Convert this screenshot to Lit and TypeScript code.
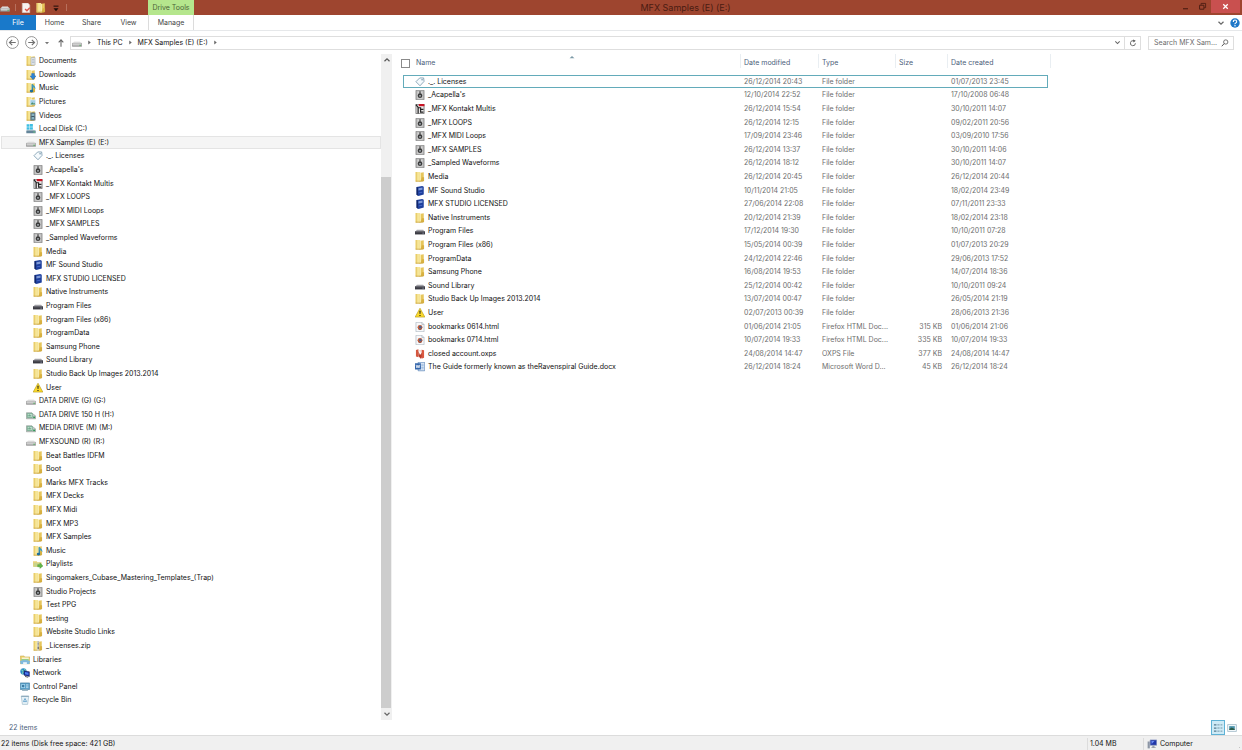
import { LitElement, html, css, svg, nothing } from "lit";
import { customElement, property } from "lit/decorators.js";
import { classMap } from "lit/directives/class-map.js";

const folderBase = svg`
  <path d="M1 0h7v15H1z" fill="#f6e698"/>
  <path d="M1 0h2.500v15H1z" fill="#e9cd6c"/>
  <path d="M7 1.500L14 .5v13.500L7 15.500z" fill="#e6c65c"/>
  <path d="M7 1.500l2.500-.4v14L7 15.500z" fill="#f9ecae"/>
  <path d="M11 8.500h3.500v6H9z" fill="#d8b141"/>
  <path d="M1 14h12.500v1.300H1z" fill="#c9a33c"/>`;

const drive = svg`
  <path d="M3.500 5.500h9l3 3.500H.5z" fill="#e6e6e6"/>
  <path d="M.6 8.500h14.800v4.800H.6z" fill="#b9b9b9" stroke="#858585"/>
  <path d="M1 9h14v1.200H1z" fill="#f2f2f2"/>
  <path d="M12 10.800h2v1.500h-2z" fill="#3fae4c"/>`;

const icons: Record<string, unknown> = {
  folder: folderBase,
  documents: svg`${folderBase}<path d="M8 2.500h6.500v12H8z" fill="#e3e7ea" stroke="#98a1aa" stroke-width=".8"/><path d="M9.500 5.500h4M9.500 8h4M9.500 10.500h4" stroke="#8c9cb0" stroke-width=".8"/>`,
  downloads: svg`${folderBase}<path d="M9 5.500h4.500v4H16L11.300 15.500 6.500 9.500H9z" fill="#2c83d6" stroke="#1c5fa5" stroke-width=".6"/>`,
  music: svg`${folderBase}<path d="M10 2v10" stroke="#1f7fae" stroke-width="2"/><path d="M10 2q5.500 2.500 5 8q-1.500-3-5-3.500z" fill="#3f9cbf"/><ellipse cx="8.800" cy="12.800" rx="2.800" ry="2.200" fill="#1f6f9e"/>`,
  pictures: svg`${folderBase}<path d="M6.500 4.500h9v8h-9z" fill="#a4cfe6" stroke="#f7f7f7"/><path d="M7 12l3-3.500 2 2 1.500-1 1.700 2.500z" fill="#4e8f6f"/>`,
  videos: svg`${folderBase}<path d="M7 2.500h8V15H7z" fill="#3d5869"/><path d="M9 4h4v4H9zM9 9.500h4v4H9z" fill="#86b3c2"/><path d="M8 3v11.500M14 3v11.500" stroke="#e2e8ec" stroke-width=".9" stroke-dasharray="1 1"/>`,
  system: svg`<path d="M1 .5h4.500v4H1zM6.200 0H11v4.500H6.200zM1 5.200h4.500v4H1zM6.200 5.200H11v4H6.200z" fill="#3fbfe3"/><path d="M2 9h11l2.500 2.500H.5z" fill="#c9d4da"/><path d="M.5 10.500h15v4.300H.5z" fill="#64859a"/><path d="M12 12h2v1.500h-2z" fill="#6ee07a"/>`,
  drive,
  netdrive: svg`<path d="M.5 4.500h9l3 3 3 2v4.500H.5z" fill="#c2c9c6" stroke="#8b9690"/><path d="M2 5.500h8v6.500H2z" fill="#d4ebdd" stroke="#5a9c7b"/><path d="M3.500 10.500V7.500M5.500 10.500V7M7.500 10.500V7.500" stroke="#2c7d55"/><path d="M11.500 10.500h3V13h-3z" fill="#2d9a56"/>`,
  tag: svg`<path d="M1.500 7.500L7.500 1.500h6.300l.7 5.500L8 14z" fill="#f5fafd" stroke="#6d8fa6" stroke-width="1.200"/><circle cx="11.300" cy="4.300" r="1.200" fill="#6d8fa6"/>`,
  speaker: svg`<path d="M1.500.5h13v15h-13z" fill="#b9b9b9" stroke="#777"/><path d="M4 2.500h8v11.500H4z" fill="#d4d4d4"/><path d="M8 2v4" stroke="#333" stroke-width="1.800"/><circle cx="8" cy="9" r="3.700" fill="#3a3a3a"/><circle cx="8" cy="9.300" r="1.400" fill="#b7c0c6"/>`,
  kontakt: svg`<path d="M1.500.5h13v15h-13z" fill="#eceaea" stroke="#444"/><path d="M6 0h9v3.500H6z" fill="#c81425"/><path d="M1.500 1L5 5.500V15" stroke="#222" stroke-width="2" fill="none"/><path d="M5 6h4v7.500M8 8.500h5.500M8 13h5.500" stroke="#222" stroke-width="1.800" fill="none"/>`,
  blue: svg`<path d="M2.500 1.500l9-1.500 2.500 1v12.500l-8.500 2.500-3-2z" fill="#1d3f9c"/><path d="M2.500 1.500l2 1v13l-2-1.500z" fill="#0f2260"/><path d="M5.500 3.500l6.500-1v3.500l-6.500 1z" fill="#7f9ad8"/><path d="M6 11l5.500-1" stroke="#4d6fd0" stroke-width="1.300"/>`,
  dark: svg`<path d="M3 6h10l2.500 3H.5z" fill="#a2a2a8"/><path d="M0 8.500h16v5H0z" fill="#3a3a42"/><path d="M1 9.500h14" stroke="#77777f"/><path d="M12 11.500h2" stroke="#b9c6e8"/>`,
  warning: svg`<path d="M8 .3L15.800 14.500H.2z" fill="#fbd92b" stroke="#b39a1c" stroke-linejoin="round"/><path d="M7 4.500h2l-.4 5H7.400zM7.100 11h1.800v1.900H7.100z" fill="#1c1c1c"/>`,
  playlists: svg`<path d="M0 3.500h6l1 1.500h6.500v7.500H0z" fill="#ecd27a"/><path d="M1 6h12.500v6.500H1z" fill="#cbd48a"/><path d="M7.500 9H11V6.500l5 4.500-5 4v-2.500H7.500z" fill="#62b94a" stroke="#418c31" stroke-width=".6"/>`,
  zip: svg`${folderBase}<path d="M6.500.5h3.500v15H6.500z" fill="#dcdcd2"/><path d="M8.300 1v9" stroke="#5f5f5f" stroke-width="1.500" stroke-dasharray="1.200 1"/><path d="M7.300 9.500h2.200v3.500H7.300z" fill="#77736a"/>`,
  libraries: svg`<path d="M.5 1.500h6l1 1.500h8v11H.5z" fill="#eccf6a" stroke="#bf9e3c" stroke-width=".7"/><path d="M3 4h11v4H3z" fill="#f7f2d3"/><path d="M2 6.500h12V9H2z" fill="#8fcb84"/><path d="M0 9.500q8-3 16 0l-1 5H1z" fill="#7fb9dd"/><path d="M5 11.500h6v3H5z" fill="#eaf5fb"/>`,
  network: svg`<circle cx="5.500" cy="5.500" r="5" fill="#2a8bc9"/><path d="M2 3q3 0 3 3t-2 3M7 1q2 2 1 5" stroke="#8ee0b0" stroke-width="1.600" fill="none"/><path d="M6.500 4.500L15 6v7.500L6.500 11.500z" fill="#1a2f9e" stroke="#0c1547" stroke-width=".8"/><path d="M8 6.500l5.500 1V11L8 10z" fill="#4b7cf0"/><path d="M8 13.500l5 1.300" stroke="#555" stroke-width="1.500"/>`,
  control: svg`<path d="M.5 1.500h14.800v10.500H.5z" fill="#5a9fc8" stroke="#457d9f"/><path d="M2 3.500h6v6H2z" fill="#a9dcf5"/><circle cx="5" cy="6.500" r="2.200" fill="#3f7ba4"/><path d="M9.500 4.500h4M9.500 6.700h4M9.500 9h4" stroke="#e6f5fd"/><path d="M4 12h8l1 2.500H3z" fill="#9fb7c4"/>`,
  recycle: svg`<path d="M2 2h12l-1.800 13H3.800z" fill="#e6f1f7" stroke="#97b5c6"/><path d="M2 2h12" stroke="#7c9db0" stroke-width="1.500"/><path d="M5.500 10.500l2.500-5 2.500 5z" fill="none" stroke="#5b9cc9" stroke-width="1.300"/>`,
  html: svg`<path d="M1.500.5h9.500l3.500 3.500v11.500h-13z" fill="#f7f8fa" stroke="#a5b0bc"/><path d="M11 .5V4h3.500" fill="none" stroke="#a5b0bc"/><circle cx="8" cy="8.500" r="3.900" fill="#c9603b"/><circle cx="8.500" cy="8.200" r="2.100" fill="#4b6590"/><path d="M5 11q3 2.500 6 0" stroke="#7a2b1a" fill="none"/>`,
  oxps: svg`<path d="M1.500 1.500l4-1V13l-4-1z" fill="#d4573f"/><path d="M10.500 1l4 1v12l-4 1.500z" fill="#d9573f"/><path d="M5.500 3.500V11l3.500 4.500 2-2.500V6L8 9.500z" fill="#bb3a27"/><path d="M6.500 1.500l2 4.500 1.500-4.500z" fill="#f1d3cb"/>`,
  word: svg`<path d="M5 .5h10.500v13.500H5z" fill="#eef4fb" stroke="#3f70ae"/><path d="M10 3.500h4M10 6h4M10 8.500h4M10 11h4" stroke="#5a8bc9"/><path d="M0 2h9.500v10H0z" fill="#3566ab"/><path d="M1.800 4.500l1.300 5 1.600-4.500 1.600 4.500 1.400-5" stroke="#fff" stroke-width="1.200" fill="none"/>`,
  computer: svg`<path d="M1 4h3.500v11H1z" fill="#8c96a5"/><path d="M5 1.500h10.500v8.500H5z" fill="#2036a8" stroke="#8d9cc4"/><path d="M7 3h5L7.500 8z" fill="#6d8df2"/><path d="M8.500 10.500h3.500V13h2v1.500H7V13h1.500z" fill="#9aa1ab"/>`,
  help: svg`<circle cx="8" cy="8" r="7.500" fill="#1f78c8"/><path d="M5.300 6.200q0-3 2.700-3t2.700 2.600q0 1.400-1.600 2.300T8 10" stroke="#fff" stroke-width="1.700" fill="none"/><circle cx="8" cy="12.300" r="1.200" fill="#fff"/>`,
  back: svg`<circle cx="8" cy="8" r="7.300" fill="#fff" stroke="#808080"/><path d="M12 8H4.500M7.600 4.700L4.300 8l3.300 3.300" stroke="#707070" stroke-width="1.500" fill="none"/>`,
  forward: svg`<circle cx="8" cy="8" r="7.300" fill="#fff" stroke="#808080"/><path d="M4 8h7.500M8.400 4.700L11.700 8l-3.300 3.300" stroke="#707070" stroke-width="1.500" fill="none"/>`,
  up: svg`<path d="M8 14V3.500M4.300 7L8 3l3.700 4" stroke="#666" stroke-width="1.700" fill="none"/>`,
  caret: svg`<path d="M2.500 5.500h11L8 11.500z" fill="#777"/>`,
  crumb: svg`<path d="M4 1.500L12 8l-8 6.500z" fill="#666"/>`,
  chevron: svg`<path d="M3 5.500l5 5 5-5" stroke="#666" stroke-width="2.400" fill="none"/>`,
  chevronUp: svg`<path d="M3 10.500l5-5 5 5" stroke="#555" stroke-width="2.400" fill="none"/>`,
  sort: svg`<path d="M1.500 11L8 5l6.500 6z" fill="#7d9aa8"/>`,
  refresh: svg`<path d="M12.800 8.500A5 5 0 1 1 9.500 3.700" stroke="#555" stroke-width="1.700" fill="none"/><path d="M8 .8l5.500 2.600L9 7z" fill="#555"/>`,
  search: svg`<circle cx="9.500" cy="6" r="4.300" stroke="#555" stroke-width="1.600" fill="none"/><path d="M6.500 9L1.500 14.500" stroke="#555" stroke-width="2"/>`,
  minimise: svg`<path d="M3.500 11h9v2h-9z" fill="#4a1c12"/>`,
  restore: svg`<path d="M5.500 5V2.500h8V10H11" stroke="#4a1c12" stroke-width="1.500" fill="none"/><path d="M2.800 5.800h7.700v7H2.800z" stroke="#4a1c12" stroke-width="1.700" fill="none"/>`,
  close: svg`<path d="M4 4l8 8M12 4l-8 8" stroke="#fff" stroke-width="2.200"/>`,
  properties: svg`<path d="M2 0h9l3 3v12.500H2z" fill="#f7f3f0" stroke="#cdb9b0"/><path d="M6.500 9.500l3 3 4.500-5" stroke="#dc5548" stroke-width="2.200" fill="none"/>`,
  menu: svg`<path d="M4 5h8" stroke="#1d0c08" stroke-width="1.600"/><path d="M4 8.500h8l-4 4.500z" fill="#1d0c08"/>`,
  details: svg`<path d="M1.500 3h4M1.500 8h4M1.500 13h4" stroke="#54798d" stroke-width="2"/><path d="M7 3h3.500M7 8h3.500M7 13h3.500M12 3h3M12 8h3M12 13h3" stroke="#6f91a3" stroke-width="1.500"/>`,
  large: svg`<path d="M1 2.500h14v11H1z" fill="#f5fafc" stroke="#8aa9b8"/><path d="M3.500 5h9v4.500h-9z" fill="#4b93ac"/><path d="M3.500 9.500l4-2.500 5 2.500V11h-9z" fill="#2d5d4b"/>`,
};

@customElement("x-icon")
class Icon extends LitElement {
  static styles = css`
    :host { display: inline-flex; flex: none; width: 10px; height: 10px; }
    svg { display: block; width: 100%; height: 100%; }
  `;
  @property() name = "folder";
  render() {
    return html`<svg viewBox="0 0 16 16" aria-hidden="true">${icons[this.name]}</svg>`;
  }
}

type Node = [level: number, icon: string, label: string];
const tree: Node[] = [
  [1, "documents", "Documents"], [1, "downloads", "Downloads"], [1, "music", "Music"],
  [1, "pictures", "Pictures"], [1, "videos", "Videos"], [1, "system", "Local Disk (C:)"],
  [1, "drive", "MFX Samples (E) (E:)"],
  [2, "tag", "._. Licenses"], [2, "speaker", "_Acapella's"], [2, "kontakt", "_MFX Kontakt Multis"],
  [2, "speaker", "_MFX LOOPS"], [2, "speaker", "_MFX MIDI Loops"], [2, "speaker", "_MFX SAMPLES"],
  [2, "speaker", "_Sampled Waveforms"], [2, "folder", "Media"], [2, "blue", "MF Sound Studio"],
  [2, "blue", "MFX STUDIO LICENSED"], [2, "folder", "Native Instruments"], [2, "dark", "Program Files"],
  [2, "folder", "Program Files (x86)"], [2, "folder", "ProgramData"], [2, "folder", "Samsung Phone"],
  [2, "dark", "Sound Library"], [2, "folder", "Studio Back Up Images 2013.2014"], [2, "warning", "User"],
  [1, "drive", "DATA DRIVE (G) (G:)"], [1, "netdrive", "DATA DRIVE 150 H (H:)"],
  [1, "netdrive", "MEDIA DRIVE (M) (M:)"], [1, "drive", "MFXSOUND (R) (R:)"],
  [2, "folder", "Beat Battles IDFM"], [2, "folder", "Boot"], [2, "folder", "Marks MFX Tracks"],
  [2, "folder", "MFX Decks"], [2, "folder", "MFX Midi"], [2, "folder", "MFX MP3"],
  [2, "folder", "MFX Samples"], [2, "music", "Music"], [2, "playlists", "Playlists"],
  [2, "folder", "Singomakers_Cubase_Mastering_Templates_(Trap)"], [2, "speaker", "Studio Projects"],
  [2, "folder", "Test PPG"], [2, "folder", "testing"], [2, "folder", "Website Studio Links"],
  [2, "zip", "_Licenses.zip"],
  [0, "libraries", "Libraries"], [0, "network", "Network"], [0, "control", "Control Panel"],
  [0, "recycle", "Recycle Bin"],
];
const selectedNode = 6;

type FileRow = [icon: string, name: string, modified: string, type: string, size: string, created: string];
const F = "File folder";
const files: FileRow[] = [
  ["tag", "._. Licenses", "26/12/2014 20:43", F, "", "01/07/2013 23:45"],
  ["speaker", "_Acapella's", "12/10/2014 22:52", F, "", "17/10/2008 06:48"],
  ["kontakt", "_MFX Kontakt Multis", "26/12/2014 15:54", F, "", "30/10/2011 14:07"],
  ["speaker", "_MFX LOOPS", "26/12/2014 12:15", F, "", "09/02/2011 20:56"],
  ["speaker", "_MFX MIDI Loops", "17/09/2014 23:46", F, "", "03/09/2010 17:56"],
  ["speaker", "_MFX SAMPLES", "26/12/2014 13:37", F, "", "30/10/2011 14:06"],
  ["speaker", "_Sampled Waveforms", "26/12/2014 18:12", F, "", "30/10/2011 14:07"],
  ["folder", "Media", "26/12/2014 20:45", F, "", "26/12/2014 20:44"],
  ["blue", "MF Sound Studio", "10/11/2014 21:05", F, "", "18/02/2014 23:49"],
  ["blue", "MFX STUDIO LICENSED", "27/06/2014 22:08", F, "", "07/11/2011 23:33"],
  ["folder", "Native Instruments", "20/12/2014 21:39", F, "", "18/02/2014 23:18"],
  ["dark", "Program Files", "17/12/2014 19:30", F, "", "10/10/2011 07:28"],
  ["folder", "Program Files (x86)", "15/05/2014 00:39", F, "", "01/07/2013 20:29"],
  ["folder", "ProgramData", "24/12/2014 22:46", F, "", "29/06/2013 17:52"],
  ["folder", "Samsung Phone", "16/08/2014 19:53", F, "", "14/07/2014 18:36"],
  ["dark", "Sound Library", "25/12/2014 00:42", F, "", "10/10/2011 09:24"],
  ["folder", "Studio Back Up Images 2013.2014", "13/07/2014 00:47", F, "", "26/05/2014 21:19"],
  ["warning", "User", "02/07/2013 00:39", F, "", "28/06/2013 21:36"],
  ["html", "bookmarks 0614.html", "01/06/2014 21:05", "Firefox HTML Doc...", "315 KB", "01/06/2014 21:06"],
  ["html", "bookmarks 0714.html", "10/07/2014 19:33", "Firefox HTML Doc...", "335 KB", "10/07/2014 19:33"],
  ["oxps", "closed account.oxps", "24/08/2014 14:47", "OXPS File", "377 KB", "24/08/2014 14:47"],
  ["word", "The Guide formerly known as theRavenspiral Guide.docx", "26/12/2014 18:24", "Microsoft Word D...", "45 KB", "26/12/2014 18:24"],
];

@customElement("app-root")
class AppRoot extends LitElement {
  static styles = css`
    :host {
      display: flex; flex-direction: column; min-height: 100vh;
      font: 7px/12px Inter, "Open Sans", sans-serif; color: #111; background: #fff;
      white-space: nowrap; cursor: default;
    }
    *, *::before, *::after { box-sizing: border-box; }
    button, input { font: inherit; color: inherit; border: 0; padding: 0; margin: 0; background: none; }
    button { display: inline-flex; align-items: center; justify-content: center; }
    a { color: inherit; text-decoration: none; }
    ul { list-style: none; margin: 0; padding: 0; }

    .titlebar { display: flex; height: 15px; background: #9e452f; color: #4a1c12; }
    .quick { display: flex; align-items: center; gap: 5px; width: 148px; }
    .quick .rule { width: 1px; height: 7px; background: #b8705d; }
    .context { width: 46px; display: flex; align-items: center; justify-content: center; background: #b5e68d; color: #4a6337; }
    .title { flex: 1; display: flex; align-items: center; justify-content: center; font-size: 9px; font-weight: 400; margin: 0; }
    .windowbtns { display: flex; height: 13px; padding-right: 2px; }
    .windowbtns button { width: 17px; }
    .windowbtns .close { width: 29px; background: #c9504f; }
    .windowbtns x-icon { width: 9px; height: 9px; }

    .tabs { display: flex; align-items: stretch; height: 16px; color: #444; border-bottom: 1px solid #e6e8ea; }
    .tabs button { width: 37px; padding-top: 1px; }
    .tabs .file { width: 36px; background: #1979ca; color: #fff; }
    .tabs .manage { width: 46px; border: solid #dcdcdc; border-width: 0 1px; margin-left: 1px; }
    .tabs .right { flex: 1; display: flex; align-items: center; justify-content: flex-end; gap: 5px; padding-right: 2px; }
    .tabs .right button { width: auto; padding: 0; }
    .tabs .right x-icon { width: 8px; height: 8px; }
    .tabs .right .help x-icon { width: 10px; height: 10px; }

    .navrow { display: flex; align-items: center; height: 23px; padding: 0 8px 0 6px; }
    .navrow .round x-icon { width: 13px; height: 13px; }
    .navrow .round { margin-right: 6px; }
    .navrow .recent { margin-right: 6px; }
    .navrow .recent x-icon { width: 6px; height: 6px; }
    .navrow .up { margin-right: 4px; }
    .address { flex: 1; display: flex; align-items: center; height: 14px; border: 1px solid #dedede; }
    .crumbs { flex: 1; display: flex; align-items: center; gap: 5px; padding-left: 1px; }
    .crumbs x-icon.sep { width: 5px; height: 5px; }
    .address button { height: 12px; width: 14px; }
    .address .refresh { width: 16px; border-left: 1px solid #dedede; }
    .address button x-icon { width: 8px; height: 8px; }
    .address .drop x-icon { width: 7px; height: 7px; }
    .search { display: flex; align-items: center; width: 86px; height: 14px; border: 1px solid #dedede; margin-left: 7px; padding: 0 4px 0 5px; }
    .search input { flex: 1; min-width: 0; outline: 0; }
    .search input::placeholder { color: #6d6d6d; opacity: 1; }
    .search button { width: 8px; }
    .search x-icon { width: 8px; height: 8px; }

    .content { flex: 1; display: flex; }
    .treepane { display: flex; width: 392px; }
    .tree { flex: 1; padding-left: 1px; }
    .tree a { display: flex; align-items: center; gap: 3px; height: 14px; border: 1px solid transparent; }
    .tree li:nth-child(5n + 2) a, .tree li:nth-child(5n + 5) a { height: 13px; }
    .tree .l0 { padding-left: 18px; }
    .tree .l1 { padding-left: 24px; }
    .tree .l2 { padding-left: 31px; }
    .tree .selected { background: #f5f5f5; border-color: #e4e4e4; }
    .scrollbar { display: flex; flex-direction: column; width: 11px; background: #f0f0f0; }
    .scrollbar button { height: 12px; }
    .scrollbar button x-icon { width: 8px; height: 8px; }
    .track { flex: 1; display: flex; flex-direction: column; }
    .above { flex: 111; }
    .thumb { flex: 532; background: #cdcdcd; margin-right: 1px; }

    .listpane { flex: 1; padding-left: 11px; }
    table { border-collapse: separate; border-spacing: 0; table-layout: fixed; width: 648px; }
    .cname { width: 338px; } .cmod { width: 78px; } .ctype { width: 77px; }
    .csize { width: 52px; } .ccreated { width: 100px; } .cend { width: 3px; }
    th { position: relative; height: 14px; padding: 4px 0 0 3px; font-weight: 400; text-align: left; color: #4c607a; border-right: 1px solid #e9eef2; line-height: 10px; }
    th.open { border-right: 0; }
    th.end { padding: 0; }
    .headname { display: flex; align-items: center; gap: 6px; margin-left: -5px; }
    .headname input { appearance: none; width: 9px; height: 9px; border: 1px solid #8a8a8a; background: #fff; }
    .sort { position: absolute; top: 0; left: 50%; width: 6px; height: 6px; margin-left: -3px; }
    thead::after { content: ""; display: block; height: 7px; }
    td { height: 14px; padding: 0 0 0 3px; color: #6d6d6d; line-height: 12px; }
    tbody tr:nth-child(5n + 1) td, tbody tr:nth-child(5n + 4) td { height: 13px; }
    td.name { padding-left: 12px; color: #111; }
    td.size { text-align: right; padding-right: 6px; }
    .file { display: flex; align-items: center; gap: 3px; }
    .focus td { box-shadow: inset 0 1px #63abba, inset 0 -1px #63abba; }
    .focus td:first-child { box-shadow: inset 0 1px #63abba, inset 0 -1px #63abba, inset 1px 0 #63abba; }
    .focus td:last-child { box-shadow: inset 0 1px #63abba, inset 0 -1px #63abba, inset -1px 0 #63abba; }

    .summary { display: flex; align-items: center; height: 15px; padding: 0 3px 0 9px; color: #4c607a; }
    .summary span { flex: 1; }
    .summary button { width: 14px; height: 15px; }
    .summary .on { background: #cdeaf6; border: 1px solid #5fb2d6; }
    .summary button x-icon { width: 10px; height: 10px; }
    .status { display: flex; align-items: center; height: 15px; padding: 1px 0 0 1px; background: #f0f0f0; border-top: 1px solid #dcdcdc; }
    .status .free { flex: 1; }
    .status .total { width: 56px; padding-left: 2px; border-left: 1px solid #dcdcdc; }
    .status .where { display: flex; align-items: center; gap: 3px; width: 92px; padding-left: 3px; border-left: 1px solid #dcdcdc; }
    .status .grip { width: 7px; height: 7px; align-self: flex-end; background: radial-gradient(circle, #c4c4c4 1px, transparent 1px) 0 0 / 3px 3px; clip-path: polygon(100% 0, 100% 100%, 0 100%); }
  `;

  private btn(cls: string, label: string, icon: string) {
    return html`<button class=${cls} aria-label=${label}><x-icon name=${icon}></x-icon></button>`;
  }

  render() {
    return html`
      <header class="titlebar">
        <div class="quick">
          <x-icon name="drive"></x-icon><span class="rule"></span>
          ${this.btn("", "Properties", "properties")}
          ${this.btn("", "New folder", "folder")}
          ${this.btn("", "Customise toolbar", "menu")}
          <span class="rule"></span>
        </div>
        <div class="context">Drive Tools</div>
        <h1 class="title">MFX Samples (E) (E:)</h1>
        <div class="windowbtns">
          ${this.btn("", "Minimise", "minimise")}
          ${this.btn("", "Restore", "restore")}
          ${this.btn("close", "Close", "close")}
        </div>
      </header>
      <nav class="tabs" aria-label="Ribbon">
        <button class="file">File</button>
        <button>Home</button><button>Share</button><button>View</button>
        <button class="manage">Manage</button>
        <div class="right">
          ${this.btn("", "Expand the ribbon", "chevron")}
          ${this.btn("help", "Help", "help")}
        </div>
      </nav>
      <div class="navrow">
        ${this.btn("round", "Back", "back")}
        ${this.btn("round", "Forward", "forward")}
        ${this.btn("recent", "Recent locations", "caret")}
        ${this.btn("up", "Up", "up")}
        <div class="address">
          <nav class="crumbs" aria-label="Address">
            <x-icon name="drive"></x-icon>
            <x-icon class="sep" name="crumb"></x-icon>
            <a href="#this-pc">This PC</a>
            <x-icon class="sep" name="crumb"></x-icon>
            <a href="#mfx-samples">MFX Samples (E) (E:)</a>
            <x-icon class="sep" name="crumb"></x-icon>
          </nav>
          ${this.btn("drop", "Previous locations", "chevron")}
          ${this.btn("refresh", "Refresh", "refresh")}
        </div>
        <div class="search">
          <input type="text" aria-label="Search MFX Samples" placeholder="Search MFX Sam..." />
          ${this.btn("", "Search", "search")}
        </div>
      </div>
      <main class="content">
        <nav class="treepane" aria-label="Folders">
          <ul class="tree">
            ${tree.map(([level, icon, label], i) => html`
              <li><a href="#" class=${classMap({ ["l" + level]: true, selected: i === selectedNode })}
                aria-current=${i === selectedNode ? "true" : nothing}
                ><x-icon name=${icon}></x-icon><span>${label}</span></a></li>`)}
          </ul>
          <div class="scrollbar">
            ${this.btn("", "Scroll up", "chevronUp")}
            <div class="track"><div class="above"></div><div class="thumb"></div></div>
            ${this.btn("", "Scroll down", "chevron")}
          </div>
        </nav>
        <section class="listpane">
          <table>
            <colgroup>
              <col class="cname" /><col class="cmod" /><col class="ctype" /><col class="csize" /><col class="ccreated" /><col class="cend" />
            </colgroup>
            <thead>
              <tr>
                <th><div class="headname"><input id="all" type="checkbox" aria-label="Select all" /><label for="all">Name</label></div><x-icon class="sort" name="sort"></x-icon></th>
                <th>Date modified</th><th>Type</th><th>Size</th><th class="open">Date created</th><th class="end"></th>
              </tr>
            </thead>
            <tbody>
              ${files.map(([icon, name, modified, type, size, created], i) => html`
                <tr class=${classMap({ focus: i === 0 })}>
                  <td class="name"><div class="file"><x-icon name=${icon}></x-icon><span>${name}</span></div></td>
                  <td>${modified}</td><td>${type}</td><td class="size">${size}</td><td>${created}</td>
                </tr>`)}
            </tbody>
          </table>
        </section>
      </main>
      <div class="summary">
        <span>22 items</span>
        ${this.btn("on", "Details view", "details")}
        ${this.btn("", "Large icons view", "large")}
      </div>
      <footer class="status">
        <span class="free">22 items (Disk free space: 421 GB)</span>
        <span class="total">1.04 MB</span>
        <span class="where"><x-icon name="computer"></x-icon>Computer</span>
        <span class="grip"></span>
      </footer>`;
  }
}
